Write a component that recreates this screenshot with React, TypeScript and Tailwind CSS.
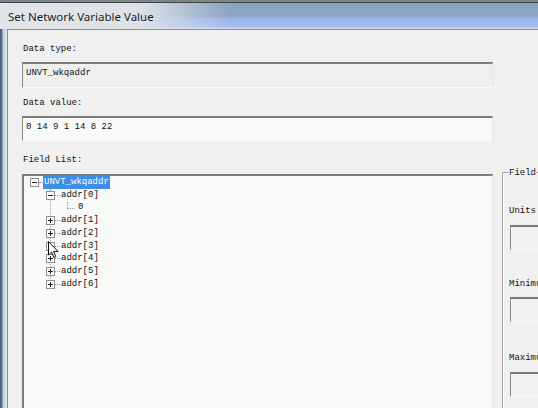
import React from 'react';

const mono = "font-['Liberation_Mono',monospace]";

function Expander({ open }: { open: boolean }) {
  return (
    <span className="relative flex h-[9px] w-[9px] shrink-0 items-center justify-center border border-[#8f8f8f] bg-[#fbfbfb]">
      <span className="h-px w-[5px] bg-[#222]" />
      {!open && <span className="absolute h-[5px] w-px bg-[#222]" />}
    </span>
  );
}

function ChildRow({ label, open }: { label: string; open: boolean }) {
  return (
    <div className="flex h-[12.75px] items-center pl-[22px]">
      <Expander open={open} />
      <span className="w-[5px] border-t border-dotted border-[#9a9a9a]" />
      <span className="ml-px leading-none">{label}</span>
    </div>
  );
}

function SunkenBox({ className = '', children }: { className?: string; children?: React.ReactNode }) {
  return (
    <div
      className={`border-t-2 border-l border-r border-b border-t-[#7b7b7b] border-l-[#8a8a8a] border-r-[#e2e4e2] border-b-[#fafafa] ${className}`}
    >
      {children}
    </div>
  );
}

export default function App() {
  const children = ['addr[1]', 'addr[2]', 'addr[3]', 'addr[4]', 'addr[5]', 'addr[6]'];

  return (
    <div className="relative flex h-[408px] w-[538px] flex-col overflow-hidden bg-[#eff0ef] text-[#111]">
      {/* top edge of the screen behind */}
      <div className="h-[3px] shrink-0 border-b border-[#3e4548] bg-[#7d8682]" />

      {/* title bar */}
      <div className="flex h-[26px] shrink-0 items-center rounded-tl-[4px] bg-[linear-gradient(to_right,#e2e5e8_0px,#dde2e7_140px,transparent_230px),linear-gradient(to_bottom,#89a2be_0%,#8ca6c4_50%,#9ab2e8_60%,#a6bdf2_92%,#dfe6f0_100%)] pl-[8px] pt-[2px] font-['Noto_Sans',sans-serif] text-[11.5px] text-[#1e1e1e]">
        Set Network Variable Value
      </div>

      <div className="flex min-h-0 flex-1">
        {/* left window frame */}
        <div className="w-[7px] shrink-0 bg-[linear-gradient(to_right,#4e5f78_0px,#5d6f8a_2px,#c3cfe0_3px,#d9e1ec_6px)]" />

        {/* client area */}
        <div className={`flex min-w-0 flex-1 flex-col border-l border-t border-[#8a9096] pl-[14px] ${mono} text-[9px]`}>
          <div className="ml-px mt-[11px] h-[12px] pt-[2px] leading-[12px]">Data type:</div>
          <SunkenBox className="mt-[9px] h-[26px] w-[471px] bg-[#eef0ee] pl-[3px] pt-[3px]">
            <div className="leading-[12px]">UNVT_wkqaddr</div>
          </SunkenBox>

          <div className="ml-px mt-[7px] h-[12px] pt-[2px] leading-[12px]">Data value:</div>
          <SunkenBox className="mt-[9px] h-[25px] w-[471px] bg-[#f7faf7] pl-[3px] pt-[3px]">
            <div className="leading-[12px]">0 14 9 1 14 8 22</div>
          </SunkenBox>

          <div className="mt-[11px] flex min-h-0 flex-1">
            <div className="flex w-[471px] shrink-0 flex-col">
              <div className="ml-px h-[12px] pt-[2px] leading-[12px]">Field List:</div>
              <div className="mt-[10px] flex-1 border-l-2 border-t-2 border-r border-[#7d7d7d] border-r-[#e2e4e2] bg-[#f7faf7]">
                <div className="relative">
                  {/* vertical tree line joining the children */}
                  <span className="absolute left-[26px] top-[13px] h-[96px] border-l border-dotted border-[#a0a0a0]" />

                  <div className="flex h-[12.75px] items-center pl-[6px]">
                    <Expander open />
                    <span className="w-[4px] border-t border-dotted border-[#9a9a9a]" />
                    <span className="flex h-[13px] items-center bg-[#3d8ee6] px-px leading-none text-white">
                      UNVT_wkqaddr
                    </span>
                  </div>

                  <div className="relative">
                    <ChildRow label="addr[0]" open />
                    <div className="flex h-[12.75px] items-center pl-[43px]">
                      <span className="relative h-full w-[10px]">
                        <span className="absolute left-0 top-0 h-1/2 border-l border-dotted border-[#a0a0a0]" />
                        <span className="absolute left-0 top-1/2 w-[8px] border-t border-dotted border-[#a0a0a0]" />
                      </span>
                      <span className="ml-px leading-none">0</span>
                    </div>
                    {children.map((c) => (
                      <ChildRow key={c} label={c} open={false} />
                    ))}
                  </div>
                </div>
              </div>
            </div>

            {/* field group box */}
            <fieldset className="ml-[9px] mt-[13px] min-w-0 flex-1 border border-r-0 border-b-0 border-[#a7aaa7] pl-[6px] shadow-[inset_1px_1px_0_#fbfbfb]">
              <legend className="px-0 pt-[2px] leading-[12px]">Field</legend>
              <div className="mt-[24px] h-[12px] pt-[2px] leading-[12px]">Units</div>
              <SunkenBox className="ml-px mt-[10px] h-[25px] border-r-0 bg-[#f0f1f0]" />
              <div className="mt-[26px] h-[12px] pt-[2px] leading-[12px]">Minimum</div>
              <SunkenBox className="ml-px mt-[9px] h-[25px] border-r-0 bg-[#f0f1f0]" />
              <div className="mt-[28px] h-[12px] pt-[2px] leading-[12px]">Maximum</div>
              <SunkenBox className="ml-px mt-[10px] h-[25px] border-r-0 bg-[#f0f1f0]" />
            </fieldset>
          </div>
        </div>
      </div>

      {/* mouse pointer */}
      <svg className="absolute left-[48px] top-[241px]" width="12" height="18" viewBox="0 0 12 18">
        <path
          d="M0.5 0.5 L0.5 14 L3.6 11 L5.8 16.5 L7.8 15.7 L5.6 10.4 L10 10.4 Z"
          fill="#ffffff"
          stroke="#111111"
          strokeWidth="1"
          strokeLinejoin="round"
        />
      </svg>
    </div>
  );
}
